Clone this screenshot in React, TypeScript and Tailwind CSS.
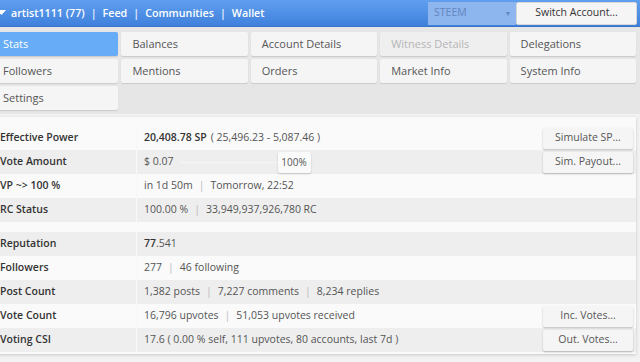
import React from "react";

const Sep = ({ light }: { light?: boolean }) => (
  <span className={light ? "mx-[6px] text-white/90" : "mx-[6px] text-[#bbbbbb]"}>|</span>
);

const tabs: { label: string; active?: boolean; disabled?: boolean }[] = [
  { label: "Stats", active: true },
  { label: "Balances" },
  { label: "Account Details" },
  { label: "Witness Details", disabled: true },
  { label: "Delegations" },
  { label: "Followers" },
  { label: "Mentions" },
  { label: "Orders" },
  { label: "Market Info" },
  { label: "System Info" },
  { label: "Settings" },
];

const Btn = ({ children }: { children: React.ReactNode }) => (
  <div className="w-[90px] h-[21px] flex items-center justify-center bg-[#f5f5f5] rounded-[2px] shadow-[0_1px_2px_rgba(0,0,0,0.25)] text-[#555] text-[10.5px] mr-[3px]">
    {children}
  </div>
);

const Row = ({
  label,
  children,
  striped,
  button,
}: {
  label: string;
  children: React.ReactNode;
  striped?: boolean;
  button?: string;
}) => (
  <div className={`flex h-[24px] items-center ${striped ? "bg-[#eeeeee]" : ""}`}>
    <div className="w-[145px] pl-[8px] font-semibold text-[#333] h-full flex items-center border-r border-[#f8f8f8]">
      {label}
    </div>
    <div className="flex-1 pl-[7px] text-[#555] flex items-center h-full">{children}</div>
    {button && <Btn>{button}</Btn>}
  </div>
);

export default function App() {
  return (
    <div className="w-[648px] -ml-2 h-[362px] overflow-hidden bg-[#f2f2f2] font-['Open_Sans',sans-serif] text-[10.5px]">
      {/* top bar */}
      <div className="h-[27px] flex items-center bg-gradient-to-b from-[#609fef] to-[#3f80dc] border-b border-[#3a74c9] pr-[3px]">
        <svg width="9" height="6" viewBox="0 0 9 6" className="ml-[5px] mr-[5px]">
          <polygon points="0,0 9,0 4.5,5" fill="#ffffff" />
        </svg>
        <div className="text-white font-semibold flex items-center text-[10.7px]">
          <span>artist1111 (77)</span>
          <Sep light />
          <span>Feed</span>
          <Sep light />
          <span>Communities</span>
          <Sep light />
          <span>Wallet</span>
        </div>
        <div className="flex-1" />
        <div className="w-[88px] h-[23px] bg-[#8db5ee] flex items-center justify-between px-[6px] text-[#6386bd] text-[10.5px]">
          <span>STEEM</span>
          <span className="text-[8px]">▾</span>
        </div>
        <div className="w-[121px] h-[23px] bg-[#f5f5f5] rounded-[2px] flex items-center justify-center text-[#333] border border-[#d8d8d8] text-[10.5px]">
          Switch Account...
        </div>
      </div>

      {/* tabs */}
      <div className="bg-[#e6e6e6] pt-[5px] pb-[4px] pr-[4px] grid grid-cols-5 gap-[3px] text-[11px]">
        {tabs.map((t) => (
          <div
            key={t.label}
            className={`h-[24px] flex items-center pl-[11px] rounded-[2px] shadow-[0_1px_1px_rgba(0,0,0,0.12)] ${
              t.active
                ? "bg-[#66acf6] text-white"
                : t.disabled
                ? "bg-[#efefef] text-[#b5b5b5]"
                : "bg-[#f5f5f5] text-[#555]"
            }`}
          >
            {t.label}
          </div>
        ))}
      </div>

      {/* panel */}
      <div className="mt-[3px] mr-[4px] bg-[#fafafa] shadow-[0_1px_3px_rgba(0,0,0,0.18)] pt-[9px] pb-[2px]">
        <Row label="Effective Power" button="Simulate SP...">
          <span className="font-semibold text-[#333]">20,408.78 SP</span>
          <span className="ml-[4px]">( 25,496.23 - 5,087.46 )</span>
        </Row>
        <Row label="Vote Amount" striped button="Sim. Payout...">
          <span>$ 0.07</span>
          <div className="ml-[7px] w-[97px] border-t border-dotted border-[#fdfdfd]" />
          <div className="w-[33px] h-[21px] bg-[#fafafa] shadow-[0_1px_2px_rgba(0,0,0,0.2)] rounded-[2px] flex items-center justify-center text-[10px] text-[#555]">
            100%
          </div>
        </Row>
        <Row label="VP ~> 100 %">
          <span>in 1d 50m</span>
          <Sep />
          <span>Tomorrow, 22:52</span>
        </Row>
        <Row label="RC Status" striped>
          <span>100.00 %</span>
          <Sep />
          <span>33,949,937,926,780 RC</span>
        </Row>

        <div className="h-[10px]" />

        <Row label="Reputation" striped>
          <span>
            <span className="font-semibold text-[#333]">77</span>.541
          </span>
        </Row>
        <Row label="Followers">
          <span>277</span>
          <Sep />
          <span>46 following</span>
        </Row>
        <Row label="Post Count" striped>
          <span>1,382 posts</span>
          <Sep />
          <span>7,227 comments</span>
          <Sep />
          <span>8,234 replies</span>
        </Row>
        <Row label="Vote Count" button="Inc. Votes...">
          <span>16,796 upvotes</span>
          <Sep />
          <span>51,053 upvotes received</span>
        </Row>
        <Row label="Voting CSI" striped button="Out. Votes...">
          <span>17.6 ( 0.00 % self, 111 upvotes, 80 accounts, last 7d )</span>
        </Row>
      </div>
    </div>
  );
}
